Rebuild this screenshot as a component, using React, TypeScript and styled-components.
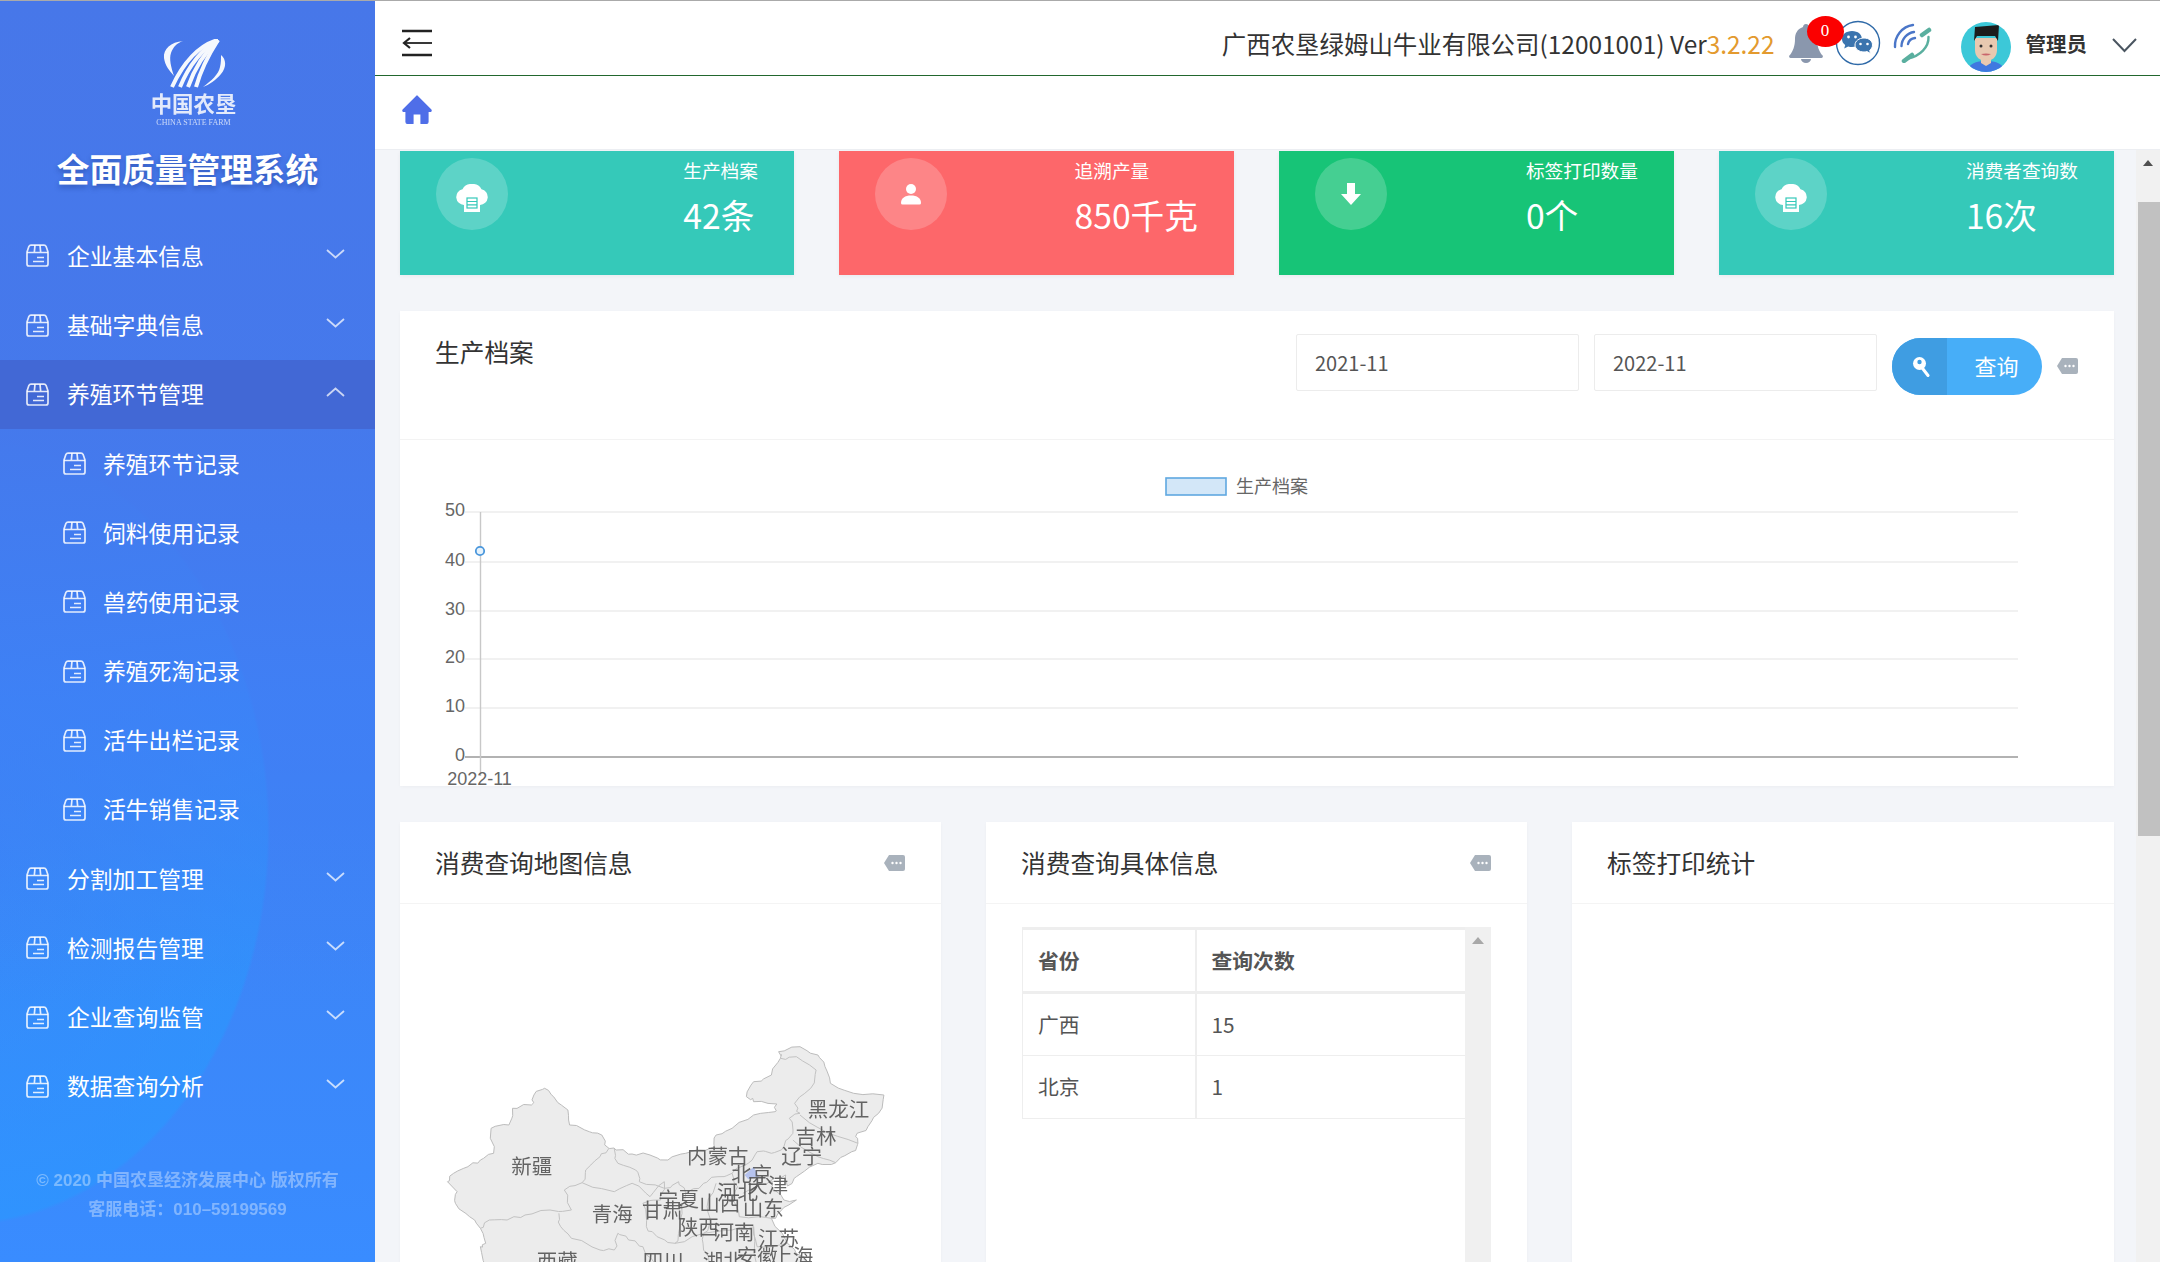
import React from 'react';
import styled, { createGlobalStyle } from 'styled-components';

const Global = createGlobalStyle`
  html, body { margin: 0; padding: 0; height: 100%; overflow: hidden; background: #f3f5f9; }
  body { font-family: "Noto Sans CJK SC", "Noto Sans", sans-serif; color: #333; }
  * { box-sizing: border-box; }
`;

const Page = styled.div`
  width: 2160px; height: 1262px; display: flex; overflow: hidden;
  border-top: 1px solid #aaaaaa;
`;

/* ---------- Sidebar ---------- */
const Sidebar = styled.aside`
  width: 375px; flex: none; height: 100%; display: flex; flex-direction: column;
  color: #fff;
  background:
    linear-gradient(180deg, #4777e9 0, #4579ec 420px, rgba(63,128,246,.8) 700px, rgba(60,132,250,0) 1000px),
    radial-gradient(ellipse 310px 395px at -40px 830px, rgba(38,152,255,.15) 0, rgba(38,155,255,.5) 99%, rgba(38,155,255,0) 100%),
    linear-gradient(180deg, #4a74e6 0%, #4378ec 45%, #3d84f6 70%, #398cff 100%);
`;
const Brand = styled.div`
  height: 220.4px; flex: none; display: flex; flex-direction: column; align-items: center;
  padding-top: 38px;
`;
const LogoMark = styled.svg`
  width: 70px; height: 50px; margin-left: 16px; opacity: .95; display: block;
`;
const LogoCn = styled.div`
  font-size: 21.4px; line-height: 24px; font-weight: 700; margin-top: 2px; margin-left: 12px;
  opacity: .85; filter: blur(.4px); white-space: nowrap;
`;
const LogoEn = styled.div`
  font-family: "Liberation Serif", serif; font-size: 8px; line-height: 10px; margin: 3px 0 0 12px;
  opacity: .7; white-space: nowrap; width: 86px; text-align: center;
`;
const SystemTitle = styled.div`
  font-size: 32.7px; line-height: 44px; font-weight: 700; margin-top: 18px; white-space: nowrap;
  text-shadow: 0 3px 5px rgba(20,40,110,.35);
`;
const Menu = styled.nav`display: flex; flex-direction: column;`;
const MenuRow = styled.div<{ $active?: boolean; $sub?: boolean }>`
  height: 69.2px; flex: none; display: flex; align-items: center;
  padding: 0 30px 0 ${p => (p.$sub ? '63px' : '26px')};
  background: ${p => (p.$active ? '#4268d5' : 'transparent')};
`;
const MenuLabel = styled.span<{ $sub?: boolean }>`
  font-size: 22.8px; line-height: 30px; margin-left: ${p => (p.$sub ? '17px' : '18px')}; flex: 1; white-space: nowrap;
`;
const SideFoot = styled.div`
  margin-top: auto; padding-bottom: 38px; text-align: center;
  font-family: "Liberation Sans", "Noto Sans CJK SC", sans-serif;
  font-size: 17px; line-height: 29px; color: rgba(255,255,255,.36); font-weight: 700; white-space: nowrap;
  filter: blur(.4px);
`;

const BoxIcon = () => (
  <svg width="23" height="23" viewBox="0 0 23 23" fill="none" stroke="rgba(255,255,255,.85)" strokeWidth="1.7" strokeLinejoin="round" style={{ flex: 'none' }}>
    <path d="M5 1.2h13c1 0 1.700.5 2.200 1.500L22 8v12a2 2 0 0 1-2 2H3a2 2 0 0 1-2-2V8l1.800-5.300C3.300 1.700 4 1.200 5 1.200z" />
    <path d="M1 8.500H22M9 1.200 8.300 8.500M14 1.200l.7 7.300M11 13.500h7M7 17.500h11" />
  </svg>
);
const Chevron = ({ up }: { up?: boolean }) => (
  <svg width="19" height="10" viewBox="0 0 19 10" fill="none" stroke="rgba(255,255,255,.72)" strokeWidth="1.8" style={{ flex: 'none', marginTop: -4 }}>
    <path d={up ? 'M1 9 9.5 1.5 18 9' : 'M1 1l8.5 7.5L18 1'} />
  </svg>
);

/* ---------- Main column ---------- */
const Main = styled.main`flex: 1; min-width: 0; display: flex; flex-direction: column; height: 100%;`;
const TopBar = styled.header`
  height: 75px; flex: none; background: #fff; border-bottom: 1px solid #22672e;
  display: flex; align-items: center; padding: 10px 23px 0 27px;
`;
const TopSpacer = styled.div`flex: 1;`;
const Company = styled.div`
  font-size: 24.45px; line-height: 34px; color: #333; white-space: nowrap; margin-top: 1px;
`;
const Version = styled.span`color: #e39a2e;`;
const BellWrap = styled.div`
  position: relative; width: 34px; height: 40px; margin-left: 14px; flex: none;
`;
const Badge = styled.span`
  position: absolute; left: 18px; top: -7px; width: 37px; height: 31px; border-radius: 50%;
  background: #fb0000; color: #fff; font-family: "Liberation Serif", serif; font-size: 17px;
  line-height: 30px; text-align: center;
`;
const WeChat = styled.svg`width: 46px; height: 46px; margin-left: 12px; flex: none;`;
const Signal = styled.svg`width: 40px; height: 40px; margin-left: 12px; flex: none;`;
const Avatar = styled.svg`width: 50px; height: 50px; margin: 7px 0 0 28px; flex: none;`;
const UserName = styled.div`
  font-size: 20.5px; line-height: 28px; font-weight: 700; color: #333; margin-left: 15px; white-space: nowrap;
`;
const UserCaret = styled.svg`width: 25px; height: 15px; margin: 4px 0 0 25px; flex: none;`;

const Crumbs = styled.div`
  height: 74px; flex: none; background: #fff; border-bottom: 1px solid #eceef2;
  display: flex; align-items: center; padding: 0 27px 5px;
`;
const Body = styled.div`flex: 1; min-height: 0; display: flex;`;
const Content = styled.div`
  flex: 1; min-width: 0; overflow: hidden; padding: 1px 22px 0 25px; display: flex; flex-direction: column; gap: 36px;
`;
const ScrollTrack = styled.div`
  width: 24px; flex: none; background: #f1f1f1; position: relative; padding-top: 52px;
`;
const ScrollUp = styled.span`
  position: absolute; top: 10px; left: 7px; width: 0; height: 0;
  border-left: 5px solid transparent; border-right: 5px solid transparent; border-bottom: 6px solid #505050;
`;
const ScrollThumb = styled.div`width: 22px; height: 634px; margin-left: 2px; background: #c1c1c1;`;

const StatRow = styled.div`display: grid; grid-template-columns: 394px 395px 395px 395px; gap: 45px; flex: none;`;
const StatCard = styled.div<{ $bg: string }>`
  height: 124px; background: ${p => p.$bg}; color: #fff; display: flex; justify-content: space-between;
  padding: 7px 36px 0; box-shadow: 0 1px 4px rgba(0,0,0,.05);
`;
const StatCircle = styled.div`
  width: 72px; height: 72px; border-radius: 50%; background: rgba(255,255,255,.2);
  display: flex; align-items: center; justify-content: center; flex: none;
`;
const StatText = styled.div`display: flex; flex-direction: column; margin-top: -2px;`;
const StatTitle = styled.div`font-size: 18.7px; line-height: 28px; white-space: nowrap;`;
const StatValue = styled.div`font-size: 33.7px; line-height: 48px; margin-top: 7px; white-space: nowrap;`;

const Panel = styled.section`background: #fff; box-shadow: 0 1px 3px rgba(0,0,0,.03); flex: none;`;
const ChartHead = styled.div`
  height: 129px; display: flex; align-items: flex-start; padding: 23px 36px 0 35px; border-bottom: 1px solid #f3f3f3;
`;
const PanelTitle = styled.h3`
  margin: -2px 0 0; font-size: 24.7px; line-height: 36px; font-weight: 400; color: #333; white-space: nowrap;
`;
const ChartTitle = styled(PanelTitle)`margin: -1px auto 0 0;`;
const DateInput = styled.input`
  width: 283px; height: 57px; border: 1px solid #ececec; border-radius: 2px; background: #fff; outline: none;
  margin-left: 15px; padding: 0 18px; font: 400 20px "Noto Sans CJK SC", sans-serif; color: #555;
`;
const SearchButton = styled.button`
  margin: 4px 0 0 15px; width: 150px; height: 57px; border: 0; padding: 0; border-radius: 29px; overflow: hidden;
  background: #47aef8; color: #fff; display: flex; font: 400 22px "Noto Sans CJK SC", sans-serif;
`;
const SearchIconBox = styled.span`
  width: 55px; height: 100%; background: #3f9de2; display: flex; align-items: center; justify-content: center; flex: none; padding-left: 2px;
`;
const SearchLabel = styled.span`flex: 1; line-height: 55px; text-align: center; padding-left: 4px;`;
const ChartSvg = styled.svg`display: block; width: 1714px; height: 346px;`;
const ChartLabel = styled.text`font-family: "Liberation Sans", sans-serif; font-size: 18px; fill: #666;`;
const LegendLabel = styled.text`font-family: "Noto Sans CJK SC", sans-serif; font-size: 18px; fill: #666;`;

const PanelRow = styled.div`display: grid; grid-template-columns: 541px 541px 542px; gap: 45px; flex: none;`;
const SmallPanel = styled(Panel)`height: 600px;`;
const SmallHead = styled.div`
  height: 82px; display: flex; align-items: center; justify-content: space-between; padding: 0 36px 0 35px;
  border-bottom: 1px solid #f4f4f4;
`;
const TableBody = styled.div`padding: 23px 36px 0; display: flex;`;
const DataTable = styled.table`
  width: 443px; border-collapse: collapse; table-layout: fixed; height: 0; font-size: 20.8px; color: #555;
  th, td { text-align: left; padding: 0 0 2px 15px; border: 1px solid #eee; border-right: 0; }
  th { height: 64px; font-weight: 700; border-top-width: 3px; border-bottom-width: 3px; }
  td { height: 63px; }
  th:first-child, td:first-child { width: 173px; }
  th:last-child, td:last-child { border-left-width: 2px; }
`;
const TableScroll = styled.div`width: 26px; height: 600px; background: #f0f0f0; position: relative; flex: none;`;
const TableArrow = styled.span`
  position: absolute; top: 10px; left: 7px; width: 0; height: 0;
  border-left: 6px solid transparent; border-right: 6px solid transparent; border-bottom: 7px solid #a8a8a8;
`;
const MapSvg = styled.svg`display: block; width: 541px; height: 262px; margin-top: 96px;`;
const MapLabel = styled.text`font-family: "Noto Sans CJK SC", sans-serif; font-size: 20.5px; fill: #555; text-anchor: middle; dominant-baseline: central; opacity: .9;`;

/* ---------- Small drawings ---------- */
const TagDots = ({ style }: { style?: React.CSSProperties }) => (
  <svg width="21" height="16" viewBox="0 0 21 16" style={{ flex: 'none', ...style }}>
    <path d="M5 0h14a2 2 0 0 1 2 2v12a2 2 0 0 1-2 2H5L0 8z" fill="#a9b2bc" />
    <circle cx="8.500" cy="8" r="1.200" fill="#fff" /><circle cx="12.500" cy="8" r="1.200" fill="#fff" /><circle cx="16.500" cy="8" r="1.200" fill="#fff" />
  </svg>
);
const CloudIcon = ({ color }: { color: string }) => (
  <svg width="34" height="28" viewBox="0 0 34 28" style={{ marginTop: 7 }}>
    <path d="M9 21a8 8 0 0 1-1.500-15.800A9.800 9.800 0 0 1 17 0a9.800 9.800 0 0 1 9.500 5.200A8 8 0 0 1 25 21v7H9z" fill="#fff" />
    <g stroke={color} strokeWidth="1.200" fill="none"><rect x="12" y="14" width="10" height="10" /><path d="M12 17.500h10M12 20.800h10" /></g>
  </svg>
);
const UserIcon = () => (
  <svg width="24" height="24" viewBox="0 0 24 24" fill="#fff">
    <circle cx="12" cy="7" r="5" /><path d="M2 21c0-5 4-7.500 10-7.500S22 16 22 21a1.500 1.500 0 0 1-1.500 1.500h-17A1.500 1.500 0 0 1 2 21z" />
  </svg>
);
const DownIcon = () => (
  <svg width="20" height="22" viewBox="0 0 20 22" fill="#fff"><path d="M6 0h8v11h6L10 22 0 11h6z" /></svg>
);
const Magnifier = () => (
  <svg width="18" height="21" viewBox="0 0 18 21">
    <circle cx="7.500" cy="7.500" r="6.500" fill="#fff" /><circle cx="7.500" cy="6" r="2.200" fill="#3f9de2" />
    <path d="M11 13l5 6.500" stroke="#fff" strokeWidth="3" strokeLinecap="round" />
  </svg>
);

const menuTop = ['企业基本信息', '基础字典信息'];
const menuSub = ['养殖环节记录', '饲料使用记录', '兽药使用记录', '养殖死淘记录', '活牛出栏记录', '活牛销售记录'];
const menuBottom = ['分割加工管理', '检测报告管理', '企业查询监管', '数据查询分析'];

const cards = [
  { bg: '#35c9b9', title: '生产档案', value: '42条', icon: <CloudIcon color="#35c9b9" /> },
  { bg: '#fd676a', title: '追溯产量', value: '850千克', icon: <UserIcon /> },
  { bg: '#17c477', title: '标签打印数量', value: '0个', icon: <DownIcon /> },
  { bg: '#35c9b9', title: '消费者查询数', value: '16次', icon: <CloudIcon color="#35c9b9" /> },
];

/* map: traced points, with deterministic small wiggles so borders look hand-surveyed */
const rough = (a: number[]) => {
  const o: number[] = [];
  for (let i = 0; i < a.length - 2; i += 2) {
    const [x0, y0, x1, y1] = [a[i], a[i + 1], a[i + 2], a[i + 3]];
    o.push(x0, y0);
    const sx = Math.sin(i * 1.7) * 5;
    const sy = Math.cos(i * 2.3) * 5;
    o.push(x0 + (x1 - x0) * 0.33 + sx, y0 + (y1 - y0) * 0.33 + sy);
    o.push(x0 + (x1 - x0) * 0.66 - sy, y0 + (y1 - y0) * 0.66 + sx);
  }
  o.push(a[a.length - 2], a[a.length - 1]);
  return o;
};
const pts = (a: number[]) => {
  const o: string[] = [];
  for (let i = 0; i < a.length; i += 2) o.push(`${(a[i] / 2.8).toFixed(1)},${(a[i + 1] / 3).toFixed(1)}`);
  return o.join(' ');
};
const outline = [133,545,150,520,190,500,225,480,262,460,255,385,305,375,315,325,368,315,375,285,405,265,430,290,470,330,475,375,530,395,565,405,585,445,605,450,650,462,700,465,750,480,800,460,880,440,885,405,930,385,990,345,1050,335,1055,312,990,305,970,290,990,245,1040,225,1065,175,1060,155,1120,140,1170,165,1190,200,1205,250,1270,280,1355,285,1340,340,1310,380,1280,400,1282,430,1265,455,1220,488,1170,490,1110,530,1085,558,1080,525,1040,540,1040,560,1075,600,1110,600,1060,640,1040,655,1085,730,1130,770,1150,800,240,800,225,740,240,730,225,685,195,650,155,610,160,575];
const borders = [
  [225,685,250,660,300,660,350,645,420,630,480,630,460,570],
  [585,445,560,470,520,510,510,548,460,570],
  [445,640,450,680,480,715,560,750,600,750,610,700,640,720,680,740,720,800],
  [510,548,600,575,650,550,700,590,740,545,730,600,680,610,690,680,720,710,770,730],
  [600,447,610,490,660,510,670,545,740,565,780,545,800,580,850,550,890,530,930,520,975,490],
  [1065,175,1110,170,1165,210,1150,265,1105,310,1120,340,1090,355,1100,400,1075,440,1040,460,1000,455,975,490],
  [1120,345,1200,400,1282,430],
  [1100,420,1170,470,1220,488],
  [885,550,860,620,870,670,850,700,850,750,880,800],
  [930,520,945,560,930,600,950,650,1040,655],
  [770,730,850,700,930,690,990,680,1000,740,1085,730],
  [990,680,1000,800],
  [800,580,790,640,780,700,770,730],
  [1040,540,1000,560,960,580],
];
const mapLabels: [string, number, number][] = [
  ['新疆',369,500],['黑龙江',1228,330],['吉林',1165,412],['辽宁',1125,470],['内蒙古',890,472],['北京',985,525],['天津',1030,558],['河北',945,578],['宁夏',780,600],['山西',895,612],['山东',1017,628],['甘肃',735,632],['青海',594,645],['陕西',835,685],['河南',935,698],['江苏',1060,718],['西藏',440,785],['四川',737,785],['湖北',905,785],['安徽',1000,770],['上海',1100,770],
];

const App = () => (
  <>
    <Global />
    <Page>
      <Sidebar>
        <Brand>
          <LogoMark viewBox="0 0 70 50">
            <g fill="#fff">
              <path d="M22 2C10 3 2 10 3 19c1 8 6 13 10 18-3-9-5-17-3-23 2-6 6-10 12-12z" />
              <path d="M60 16c5 4 6 12 0 19-5 6-12 11-18 13 8-6 16-13 17-20 1-4 1-8 1-12z" />
            </g>
            <g fill="none" stroke="#fff" strokeWidth="4">
              <path d="M57 1C38 6 22 24 11 48" /><path d="M57 1C42 9 28 26 19 48" /><path d="M57 1C45 12 34 28 27 48" /><path d="M57 1C48 15 40 30 35 48" />
            </g>
          </LogoMark>
          <LogoCn>中国农垦</LogoCn>
          <LogoEn>CHINA STATE FARM</LogoEn>
          <SystemTitle>全面质量管理系统</SystemTitle>
        </Brand>
        <Menu>
          {menuTop.map(t => (
            <MenuRow key={t}><BoxIcon /><MenuLabel>{t}</MenuLabel><Chevron /></MenuRow>
          ))}
          <MenuRow $active><BoxIcon /><MenuLabel>养殖环节管理</MenuLabel><Chevron up /></MenuRow>
          {menuSub.map(t => (
            <MenuRow key={t} $sub><BoxIcon /><MenuLabel $sub>{t}</MenuLabel></MenuRow>
          ))}
          {menuBottom.map(t => (
            <MenuRow key={t}><BoxIcon /><MenuLabel>{t}</MenuLabel><Chevron /></MenuRow>
          ))}
        </Menu>
        <SideFoot>
          <div>© 2020 中国农垦经济发展中心 版权所有</div>
          <div>客服电话：010–59199569</div>
        </SideFoot>
      </Sidebar>
      <Main>
        <TopBar>
          <svg width="30" height="28" viewBox="0 0 30 28" fill="none" stroke="#222" style={{ flex: 'none' }}>
            <path d="M0 2h30M0 26h30" strokeWidth="2.600" />
            <path d="M3 14h27" strokeWidth="1.800" /><path d="M8 9l-6 5 6 5" strokeWidth="2.200" />
          </svg>
          <TopSpacer />
          <Company>广西农垦绿姆山牛业有限公司(12001001) Ver<Version>3.2.22</Version></Company>
          <BellWrap>
            <svg width="34" height="40" viewBox="0 0 34 40" fill="#8a97ad">
              <path d="M17 1c-2 0-3 1.500-3 3C8 6 6 11 6 16c0 7-2 12-5 16a1.600 1.600 0 0 0 1 3h30a1.600 1.600 0 0 0 1-3c-3-4-5-9-5-16 0-5-2-10-8-12 0-1.500-1-3-3-3z" />
              <path d="M12 36h10a5 4 0 0 1-10 0z" />
            </svg>
            <Badge>0</Badge>
          </BellWrap>
          <WeChat viewBox="0 0 46 46">
            <circle cx="23" cy="23" r="21.500" fill="#fff" stroke="#2f6aa8" strokeWidth="1.400" />
            <path d="M17 11c-6 0-10 3.600-10 8 0 2.500 1.200 4.500 3.200 6l-1 3.500 4-2c1.200.4 2.500.5 3.800.5 6 0 10-3.600 10-8s-4-8-10-8z" fill="#3b74ae" />
            <path d="M29 18c-5 0-9 3-9 7s4 7 9 7c1 0 2-.1 3-.4l3.500 1.900-.8-3.200c1.700-1.300 2.800-3.200 2.800-5.300 0-4-3.500-7-8.500-7z" fill="#3b74ae" stroke="#fff" strokeWidth="1" />
            <g fill="#fff"><circle cx="13.500" cy="17" r="1.400" /><circle cx="20.500" cy="17" r="1.400" /><circle cx="25.500" cy="24" r="1.300" /><circle cx="32.500" cy="24" r="1.300" /></g>
          </WeChat>
          <Signal viewBox="0 0 40 40" fill="none" strokeLinecap="round">
            <g stroke="#4a76c8" strokeWidth="2.400">
              <path d="M2 24A21 21 0 0 1 20 2" /><path d="M8.500 23A14.500 14.500 0 0 1 21 9" /><path d="M15 21a8 8 0 0 1 7-6" />
            </g>
            <path d="M35.500 14C36 24 27 33 15 35.500" stroke="#5aaf9f" strokeWidth="2.400" />
            <path d="M29 12l7-5M11 38l8-6" stroke="#5aaf9f" strokeWidth="4.500" />
          </Signal>
          <Avatar viewBox="0 0 50 50">
            <defs><clipPath id="av"><circle cx="25" cy="25" r="25" /></clipPath></defs>
            <g clipPath="url(#av)">
              <rect width="50" height="50" fill="#3cc8d8" />
              <path d="M6 50c1-8 9-11 19-11s18 3 19 11z" fill="#3f78e0" />
              <path d="M20 33h10v8l-5 3-5-3z" fill="#e8c9b0" />
              <path d="M14 16h22v12c0 7-5 11-11 11S14 35 14 28z" fill="#e8c9b0" />
              <path d="M13 19l1-14 24-2-1 16-3-5H16z" fill="#1c1c1c" />
              <circle cx="20" cy="24" r="1.500" fill="#333" /><circle cx="30" cy="24" r="1.500" fill="#333" />
              <path d="M20 32q5 3 10 0-5-1-10 0z" fill="#c9656b" />
            </g>
          </Avatar>
          <UserName>管理员</UserName>
          <UserCaret viewBox="0 0 25 15" fill="none" stroke="#4a5560" strokeWidth="2"><path d="M1 1l11.500 12L24 1" /></UserCaret>
        </TopBar>
        <Crumbs>
          <svg width="30" height="30" viewBox="0 0 30 30" fill="#4f6ee8" stroke="#4f6ee8" strokeWidth="1.200" strokeLinejoin="round">
            <path d="M15 1 29 15a1 1 0 0 1-1 1.500h-2V27a1.500 1.500 0 0 1-1.500 1.500H19V19h-8v9.500H5.500A1.500 1.500 0 0 1 4 27V16.500H2A1 1 0 0 1 1 15z" />
          </svg>
        </Crumbs>
        <Body>
          <Content>
            <StatRow>
              {cards.map(c => (
                <StatCard key={c.title} $bg={c.bg}>
                  <StatCircle>{c.icon}</StatCircle>
                  <StatText>
                    <StatTitle>{c.title}</StatTitle>
                    <StatValue>{c.value}</StatValue>
                  </StatText>
                </StatCard>
              ))}
            </StatRow>
            <Panel>
              <ChartHead>
                <ChartTitle>生产档案</ChartTitle>
                <DateInput readOnly value="2021-11" />
                <DateInput readOnly value="2022-11" />
                <SearchButton>
                  <SearchIconBox><Magnifier /></SearchIconBox>
                  <SearchLabel>查询</SearchLabel>
                </SearchButton>
                <TagDots style={{ margin: '24px 0 0 15px' }} />
              </ChartHead>
              <ChartSvg viewBox="0 0 1714 346">
                <rect x="766" y="38" width="60" height="17" fill="#d3e7f8" stroke="#5fa8e0" strokeWidth="1.600" />
                <LegendLabel x="836" y="53">生产档案</LegendLabel>
                {[50, 40, 30, 20, 10, 0].map((v, i) => {
                  const y = [72, 122, 171, 219, 268, 317][i];
                  return (
                    <g key={v}>
                      <line x1="65" x2="1618" y1={y} y2={y} stroke={v === 0 ? '#999' : '#e4e4e4'} strokeWidth={v === 0 ? 1.600 : 1.200} />
                      <ChartLabel x="65" y={y + 4} textAnchor="end">{v}</ChartLabel>
                    </g>
                  );
                })}
                <line x1="80.500" x2="80.500" y1="72" y2="336" stroke="#c8c8c8" strokeWidth="1.400" />
                <circle cx="80" cy="111" r="4.200" fill="#e6f2fb" stroke="#4a97dc" strokeWidth="1.800" />
                <ChartLabel x="79.500" y="345" textAnchor="middle">2022-11</ChartLabel>
              </ChartSvg>
            </Panel>
            <PanelRow>
              <SmallPanel>
                <SmallHead><PanelTitle>消费查询地图信息</PanelTitle><TagDots /></SmallHead>
                <MapSvg viewBox="0 0 541 262">
                  <polygon points={pts(rough(outline))} fill="#ececec" stroke="#bcbcbc" strokeWidth="1" strokeLinejoin="round" />
                  {borders.map((b, i) => (
                    <polyline key={i} points={pts(rough(b))} fill="none" stroke="#c2c2c2" strokeWidth="1" />
                  ))}
                  <polygon points={pts([965,525,990,500,1005,530,975,538])} fill="#b6c3ee" />
                  {mapLabels.map(([t, x, y]) => (
                    <MapLabel key={t} x={x / 2.8} y={y / 3 - 2}>{t}</MapLabel>
                  ))}
                </MapSvg>
              </SmallPanel>
              <SmallPanel>
                <SmallHead><PanelTitle>消费查询具体信息</PanelTitle><TagDots /></SmallHead>
                <TableBody>
                  <DataTable>
                    <thead><tr><th>省份</th><th>查询次数</th></tr></thead>
                    <tbody>
                      <tr><td>广西</td><td>15</td></tr>
                      <tr><td>北京</td><td>1</td></tr>
                    </tbody>
                  </DataTable>
                  <TableScroll><TableArrow /></TableScroll>
                </TableBody>
              </SmallPanel>
              <SmallPanel>
                <SmallHead><PanelTitle>标签打印统计</PanelTitle></SmallHead>
              </SmallPanel>
            </PanelRow>
          </Content>
          <ScrollTrack><ScrollUp /><ScrollThumb /></ScrollTrack>
        </Body>
      </Main>
    </Page>
  </>
);

export default App;
